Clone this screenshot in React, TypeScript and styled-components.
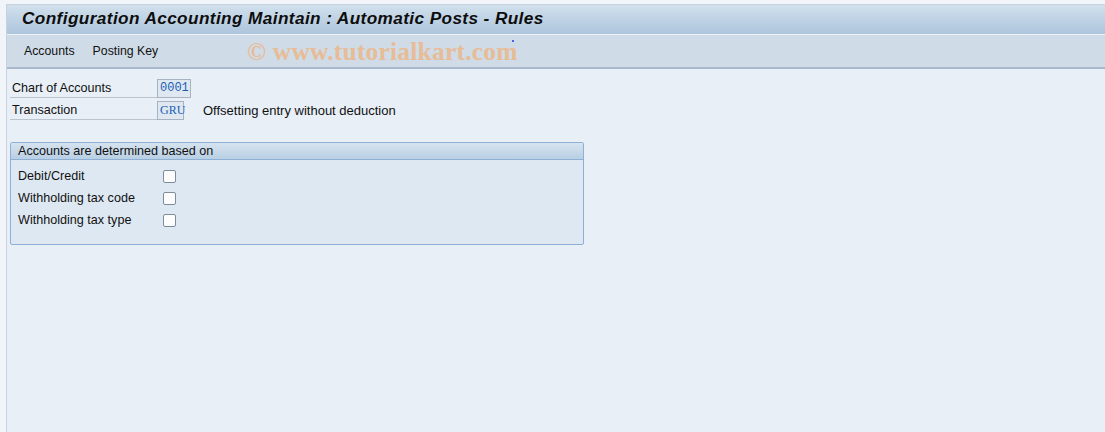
import React from "react";
import styled, { createGlobalStyle } from "styled-components";

const Global = createGlobalStyle`
  html, body { margin: 0; padding: 0; }
  body { background: #f1f4f8; font-family: Tahoma, "Liberation Sans", "DejaVu Sans", sans-serif; }
`;

const Frame = styled.div`
  width: 1105px;
  height: 432px;
  box-sizing: border-box;
  padding: 4px 0 0 6px;
  background: #f1f4f8;
  display: flex;
  overflow: hidden;
`;

const Main = styled.div`
  flex: 1;
  display: flex;
  flex-direction: column;
  border-left: 1px solid #c8d2de;
  border-top: 1px solid #c8d2de;
  background: #e8eff7;
`;

const TitleBar = styled.div`
  height: 30px;
  box-sizing: border-box;
  padding: 0 0 3px 15px;
  background: linear-gradient(#d1e0ec, #adc5dd);
  border-bottom: 1px solid #eef3f8;
  display: flex;
  align-items: center;
`;

const Title = styled.h1`
  margin: 0;
  font: italic bold 17.2px "Liberation Sans", sans-serif;
  color: #0d0d0d;
  letter-spacing: 0.4px;
`;

const MenuBar = styled.div`
  position: relative;
  height: 32px;
  background: #cfdce7;
  border-bottom: 2px solid #a9b9cb;
  display: flex;
  align-items: center;
  gap: 18px;
  padding-left: 17px;
`;

const MenuItem = styled.span`
  font: 12.3px "Liberation Sans", sans-serif;
  color: #111;
`;

const Watermark = styled.span`
  position: absolute;
  left: 240px;
  top: 2px;
  font: bold 25.5px "Liberation Serif", serif;
  color: #eab98e;
  opacity: 0.9;
  letter-spacing: 0.2px;
`;

const Dot = styled.span`
  position: absolute;
  left: 505px;
  top: 5px;
  width: 2px;
  height: 2px;
  border-radius: 1px;
  background: #2233ee;
`;

const Content = styled.div`
  padding: 8px 0 0 3px;
  display: flex;
  flex-direction: column;
`;

const FieldRow = styled.div`
  display: flex;
  align-items: center;
  height: 22px;
`;

const Label = styled.div`
  width: 147px;
  height: 19px;
  padding-left: 2px;
  border-bottom: 1px solid #b9c4cf;
  box-sizing: border-box;
  font: 12.6px "Liberation Sans", sans-serif;
  color: #111;
  display: flex;
  align-items: center;
`;

const Input = styled.div<{ $w: number; $serif?: boolean }>`
  width: ${(p) => p.$w}px;
  height: 19px;
  box-sizing: border-box;
  border: 1px solid #a7b3c0;
  background: #dfe8f1;
  color: #1a5fb4;
  font: ${(p) => (p.$serif ? `12px "Liberation Serif", serif` : `12px "Liberation Mono", monospace`)};
  display: flex;
  align-items: center;
  padding-left: 2px;
`;

const Desc = styled.span`
  margin-left: 19px;
  font: 13px "Liberation Sans", sans-serif;
  color: #111;
`;

const Group = styled.div`
  margin-top: 21px;
  width: 574px;
  height: 103px;
  box-sizing: border-box;
  border: 1px solid #8eb0d4;
  border-radius: 2px;
  background: #dee8f3;
  display: flex;
  flex-direction: column;
`;

const GroupHeader = styled.div`
  height: 16px;
  background: linear-gradient(#d6e3ef, #b9cfe4);
  border-bottom: 1px solid #8eb0d4;
  padding-left: 7px;
  font: 12.6px "Liberation Sans", sans-serif;
  color: #111;
  display: flex;
  align-items: center;
`;

const GroupBody = styled.div`
  padding: 5px 0 0 7px;
  display: flex;
  flex-direction: column;
`;

const CheckRow = styled.div`
  display: flex;
  align-items: center;
  height: 22px;
`;

const CheckLabel = styled.span`
  width: 145px;
  font: 12.6px "Liberation Sans", sans-serif;
  color: #111;
`;

const Box = styled.span`
  width: 11px;
  height: 11px;
  border: 1px solid #7f8d9b;
  border-radius: 2px;
  background: #fdfdfd;
`;

export default function App() {
  return (
    <>
      <Global />
      <Frame>
        <Main>
          <TitleBar>
            <Title>Configuration Accounting Maintain : Automatic Posts - Rules</Title>
          </TitleBar>
          <MenuBar>
            <MenuItem>Accounts</MenuItem>
            <MenuItem>Posting Key</MenuItem>
            <Watermark>© www.tutorialkart.com</Watermark>
            <Dot />
          </MenuBar>
          <Content>
            <FieldRow>
              <Label>Chart of Accounts</Label>
              <Input $w={34}>0001</Input>
            </FieldRow>
            <FieldRow>
              <Label>Transaction</Label>
              <Input $w={27} $serif>GRU</Input>
              <Desc>Offsetting entry without deduction</Desc>
            </FieldRow>
            <Group>
              <GroupHeader>Accounts are determined based on</GroupHeader>
              <GroupBody>
                <CheckRow>
                  <CheckLabel>Debit/Credit</CheckLabel>
                  <Box />
                </CheckRow>
                <CheckRow>
                  <CheckLabel>Withholding tax code</CheckLabel>
                  <Box />
                </CheckRow>
                <CheckRow>
                  <CheckLabel>Withholding tax type</CheckLabel>
                  <Box />
                </CheckRow>
              </GroupBody>
            </Group>
          </Content>
        </Main>
      </Frame>
    </>
  );
}
